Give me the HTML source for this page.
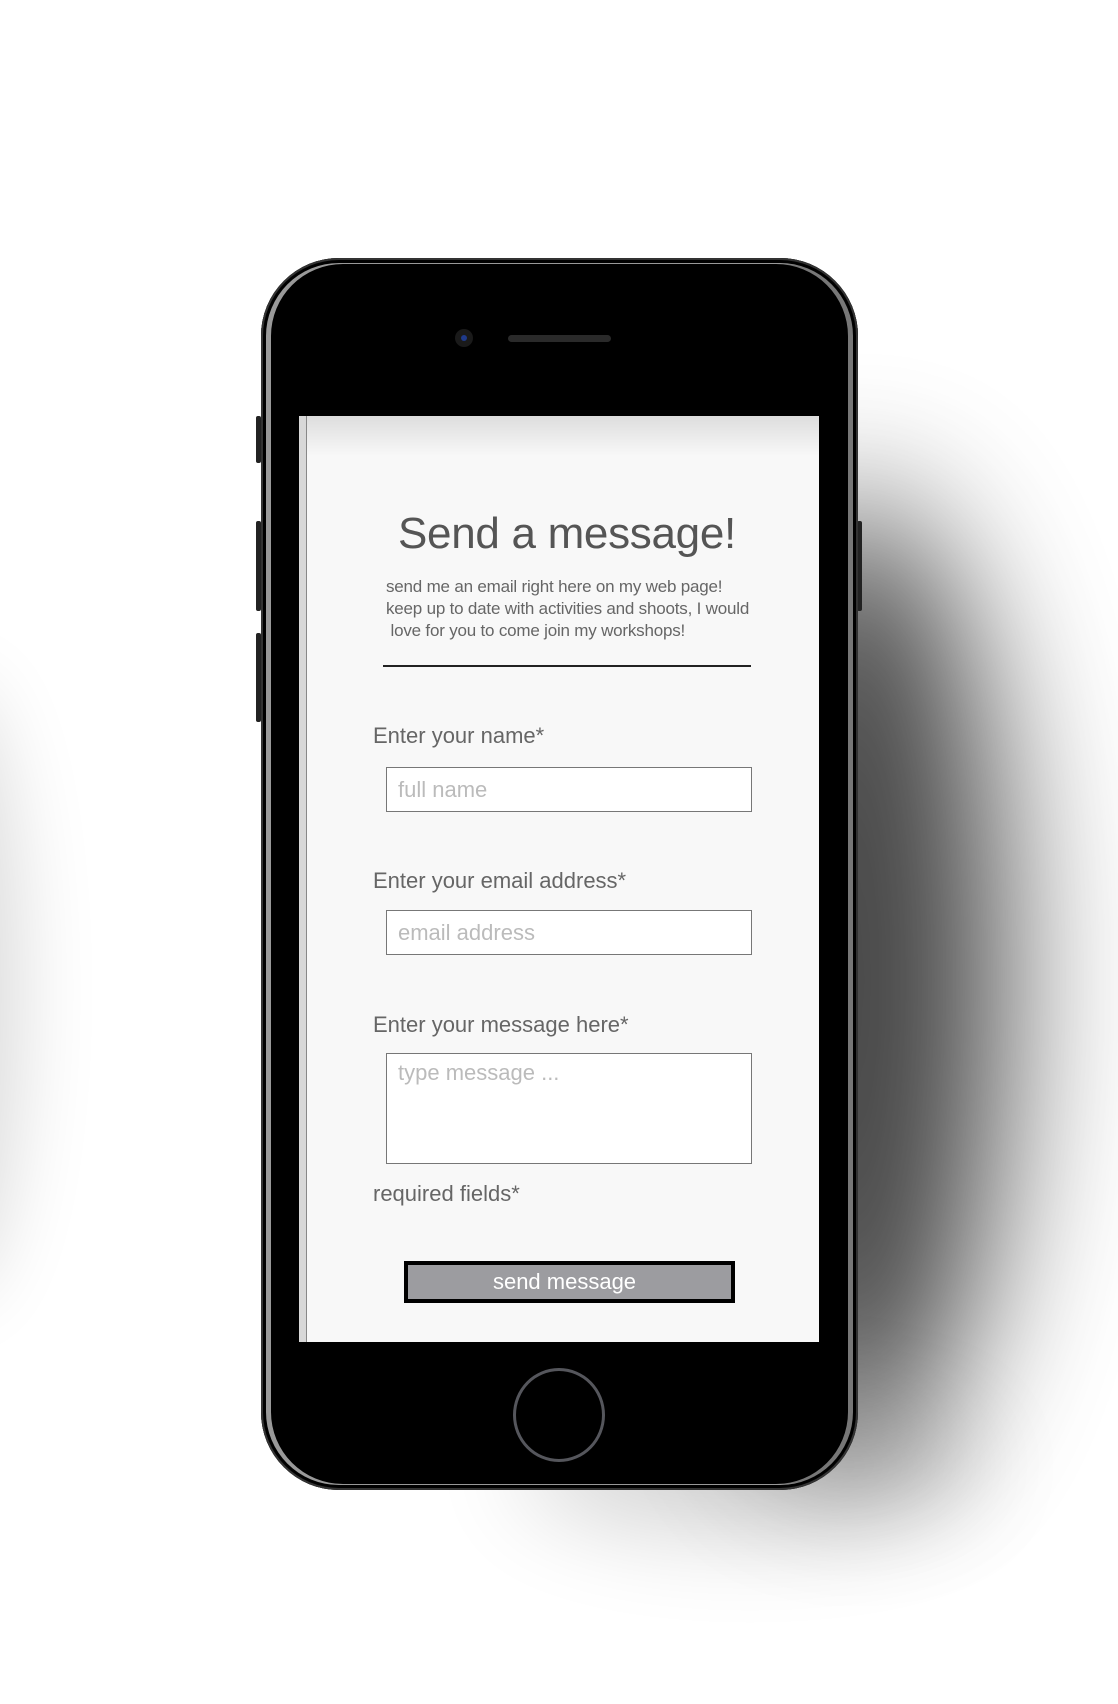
<!DOCTYPE html>
<html><head><meta charset="utf-8"><style>
*{margin:0;padding:0;box-sizing:border-box}
body{width:1118px;height:1704px;background:#fff;position:relative;overflow:hidden;font-family:"Liberation Sans",sans-serif}
.abs{position:absolute}
.sh1{left:705px;top:500px;width:300px;height:960px;border-radius:50%;background:#000;filter:blur(75px);opacity:.72}
.sh2{left:520px;top:1400px;width:460px;height:130px;border-radius:50%;background:#000;filter:blur(50px);opacity:.18}
.sh3{left:-120px;top:680px;width:140px;height:620px;border-radius:50%;background:#000;filter:blur(40px);opacity:.14}
.phone{left:261px;top:258px;width:597px;height:1232px;border-radius:78px;background:#000;box-shadow:inset 0 0 0 2px #333,inset 0 0 0 5px #000,inset 4px 0 0 6px #999,inset -4px 0 0 6px #777}
.btn{background:#222;border-radius:2px;width:5px}
.screen{left:299px;top:416px;width:520px;height:926px;background:#f8f8f8;overflow:hidden}
.screen .strip{left:0;top:0;width:8px;height:926px;background:#d8d8d8;border-right:1px solid #888}
.topsh{left:0;top:0;width:520px;height:40px;background:linear-gradient(#ddd,#f8f8f8)}
.t{color:#555;white-space:nowrap}
.inp{background:#fff;border:1px solid #777}
.ph{color:#bbb;font-size:22px}
</style></head><body>
<div class="abs sh1"></div><div class="abs sh2"></div><div class="abs sh3"></div>
<div class="abs btn" style="left:256px;top:416px;height:47px"></div>
<div class="abs btn" style="left:256px;top:521px;height:90px"></div>
<div class="abs btn" style="left:256px;top:633px;height:89px"></div>
<div class="abs btn" style="left:857px;top:521px;height:90px"></div>
<div class="abs phone"></div>
<div class="abs" style="left:455px;top:329px;width:18px;height:18px;border-radius:50%;background:#1a1a1a"></div>
<div class="abs" style="left:461px;top:335px;width:6px;height:6px;border-radius:50%;background:#1f3a8a"></div>
<div class="abs" style="left:508px;top:335px;width:103px;height:7px;border-radius:4px;background:#2a2a2a"></div>
<div class="abs" style="left:513px;top:1368px;width:92px;height:94px;border-radius:50%;border:3px solid #55565c"></div>
<div class="abs screen">
 <div class="abs topsh"></div>
 <div class="abs strip"></div>
</div>
<div class="abs t" style="left:398px;top:506px;font-size:44px;line-height:56px;letter-spacing:-0.3px">Send a message!</div>
<div class="abs t" style="left:386px;top:576px;font-size:17px;line-height:22px;color:#666;letter-spacing:-0.2px">send me an email right here on my web page!<br>keep up to date with activities and shoots, I would<br>&nbsp;love for you to come join my workshops!</div>
<div class="abs" style="left:383px;top:665px;width:368px;height:2px;background:#222"></div>
<div class="abs t" style="left:373px;top:723px;font-size:22px;color:#666">Enter your name*</div>
<div class="abs inp" style="left:386px;top:767px;width:366px;height:45px"><div class="abs ph" style="left:11px;top:9px">full name</div></div>
<div class="abs t" style="left:373px;top:868px;font-size:22px;color:#666">Enter your email address*</div>
<div class="abs inp" style="left:386px;top:910px;width:366px;height:45px"><div class="abs ph" style="left:11px;top:9px">email address</div></div>
<div class="abs t" style="left:373px;top:1012px;font-size:22px;color:#666">Enter your message here*</div>
<div class="abs inp" style="left:386px;top:1053px;width:366px;height:111px"><div class="abs ph" style="left:11px;top:6px">type message ...</div></div>
<div class="abs t" style="left:373px;top:1181px;font-size:22px;color:#666">required fields*</div>
<div class="abs" style="left:404px;top:1261px;width:331px;height:42px;background:#9c9ca0;border:4px solid #000;color:#fff;font-size:22px;text-align:center;line-height:33px;text-indent:-10px">send message</div>
</body></html>
